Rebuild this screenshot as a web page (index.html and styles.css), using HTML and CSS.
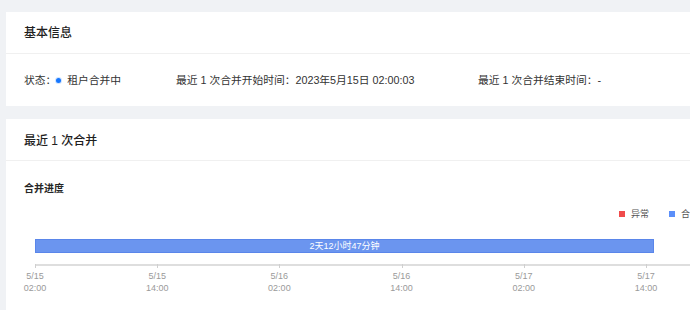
FILE: index.html
```html
<!DOCTYPE html>
<html lang="zh-CN">
<head>
<meta charset="utf-8">
<title>合并</title>
<link rel="stylesheet" href="styles.css">
</head>
<body>
<div class="page">
  <section class="card">
    <div class="card-head">基本信息</div>
    <div class="info-body">
      <div class="info-item">状态：<span class="dot"></span>租户合并中</div>
      <div class="info-item">最近 1 次合并开始时间：2023年5月15日 02:00:03</div>
      <div class="info-item">最近 1 次合并结束时间：-</div>
    </div>
  </section>
  <section class="card card-second">
    <div class="card-head card-head-2">最近 1 次合并</div>
    <div class="chart-body">
      <div class="chart-title">合并进度</div>
      <div class="legend">
        <span class="legend-item"><span class="sw sw-red"></span>异常</span>
        <span class="legend-item"><span class="sw sw-blue"></span>合并中</span>
      </div>
      <div class="plot">
        <div class="bar" style="width:617px">2天12小时47分钟</div>
        <div class="axis-line"></div>
        <div class="ticks">
          <div class="tick"><span>5/15</span><span>02:00</span></div>
          <div class="tick"><span>5/15</span><span>14:00</span></div>
          <div class="tick"><span>5/16</span><span>02:00</span></div>
          <div class="tick"><span>5/16</span><span>14:00</span></div>
          <div class="tick"><span>5/17</span><span>02:00</span></div>
          <div class="tick"><span>5/17</span><span>14:00</span></div>
        </div>
      </div>
    </div>
  </section>
</div>
</body>
</html>
```
FILE: styles.css
```css
html, body {
  margin: 0;
  padding: 0;
  overflow: hidden;
  background: #f0f2f5;
}
body {
  font-family: "Liberation Sans", "Noto Sans CJK SC", sans-serif;
  color: #333;
}
.page {
  padding: 12px 0 0 6px;
  width: 760px;
}
.card {
  background: #fff;
  width: 740px;
}
.card-second {
  margin-top: 13px;
  height: 200px;
}
.card-head {
  padding: 12px 18px 11px;
  font-size: 12px;
  line-height: 18px;
  font-weight: 500;
  color: #1f1f1f;
  border-bottom: 1px solid #f0f0f0;
}
.card-head-2 {
  padding-top: 13px;
  padding-bottom: 10px;
}
.info-body {
  display: grid;
  grid-template-columns: 152px 302px 1fr;
  padding: 18px 18px;
  font-size: 10.75px;
  line-height: 16px;
  color: #333;
}
.info-item {
  display: flex;
  align-items: center;
  white-space: nowrap;
}
.dot {
  width: 5px;
  height: 5px;
  border-radius: 50%;
  background: #1677ff;
  box-shadow: 0 0 0 1px rgba(22, 119, 255, 0.2);
  margin: 0 6px 0 0;
}
.chart-body {
  padding: 21px 18px 0;
}
.chart-title {
  font-size: 10px;
  line-height: 14px;
  font-weight: 700;
  color: #262626;
}
.legend {
  display: flex;
  justify-content: flex-end;
  gap: 20px;
  margin-top: 12px;
  padding-right: 20px;
  font-size: 9px;
  line-height: 12px;
  color: #555;
}
.legend-item {
  display: flex;
  align-items: center;
}
.sw {
  width: 6px;
  height: 6px;
  margin-right: 6px;
}
.sw-red { background: #f04b4b; }
.sw-blue { background: #5b8ff9; }
.plot {
  margin-top: 19px;
  padding-left: 11px;
}
.bar {
  height: 12px;
  line-height: 12px;
  background: #6b95ef;
  border: 1px solid #5a86ea;
  box-sizing: content-box;
  color: #fff;
  font-size: 9px;
  text-align: center;
}
.axis-line {
  margin-top: 11px;
  height: 2px;
  background: #dedede;
}
.ticks {
  display: flex;
  margin-left: -61.1px;
}
.tick {
  width: 122.2px;
  flex: none;
  display: flex;
  flex-direction: column;
  align-items: center;
  padding-top: 4px;
  font-size: 9px;
  line-height: 12px;
  color: #9a9a9a;
  position: relative;
}
.tick::before {
  content: "";
  position: absolute;
  top: -2px;
  left: 50%;
  width: 1px;
  height: 4px;
  background: #cfcfcf;
}
```
